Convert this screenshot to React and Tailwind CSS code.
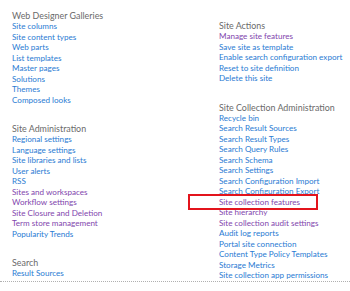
import React from "react";

function Group({ title, items, className = "" }) {
  return (
    <div className={"flex flex-col " + className}>
      <div className="text-[8.9px] leading-[11px] text-[#6a6a6a]">{title}</div>
      {items.map(([t, v]) => (
        <div key={t} className={"text-[8.1px] leading-[10.5px] whitespace-nowrap " + (v ? "text-[#8246ad]" : "text-[#2a7bd3]")}>
          {t}
        </div>
      ))}
    </div>
  );
}

export default function App() {
  return (
    <div className="w-[350px] h-[291px] bg-white" style={{ fontFamily: 'Lato, "Open Sans", sans-serif' }}>
      <div className="relative h-[282px] overflow-hidden border-b border-dotted border-[#b0b0b0] flex">
        <div className="w-[219px] shrink-0 pl-[12px] pt-[10px] flex flex-col gap-[18px]">
          <Group
            title="Web Designer Galleries"
            items={[["Site columns"], ["Site content types"], ["Web parts"], ["List templates"], ["Master pages"], ["Solutions"], ["Themes"], ["Composed looks"]]}
          />
          <Group
            title="Site Administration"
            items={[["Regional settings"], ["Language settings"], ["Site libraries and lists"], ["User alerts"], ["RSS"], ["Sites and workspaces", 1], ["Workflow settings", 1], ["Site Closure and Deletion", 1], ["Term store management", 1], ["Popularity Trends"]]}
          />
          <Group title="Search" items={[["Result Sources"], ["Result Types"]]} />
        </div>
        <div className="shrink-0 pt-[20px] flex flex-col gap-[18px]">
          <Group
            title="Site Actions"
            items={[["Manage site features", 1], ["Save site as template"], ["Enable search configuration export"], ["Reset to site definition"], ["Delete this site"]]}
          />
          <Group
            title="Site Collection Administration"
            items={[["Recycle bin"], ["Search Result Sources"], ["Search Result Types"], ["Search Query Rules"], ["Search Schema"], ["Search Settings"], ["Search Configuration Import"], ["Search Configuration Export"], ["Site collection features", 1], ["Site hierarchy", 1], ["Site collection audit settings", 1], ["Audit log reports"], ["Portal site connection"], ["Content Type Policy Templates"], ["Storage Metrics"], ["Site collection app permissions"], ["Site Policies"]]}
          />
        </div>
        <div className="absolute left-[188px] top-[194px] w-[130px] h-[16px] border-2 border-[#e3141c]" />
      </div>
    </div>
  );
}
